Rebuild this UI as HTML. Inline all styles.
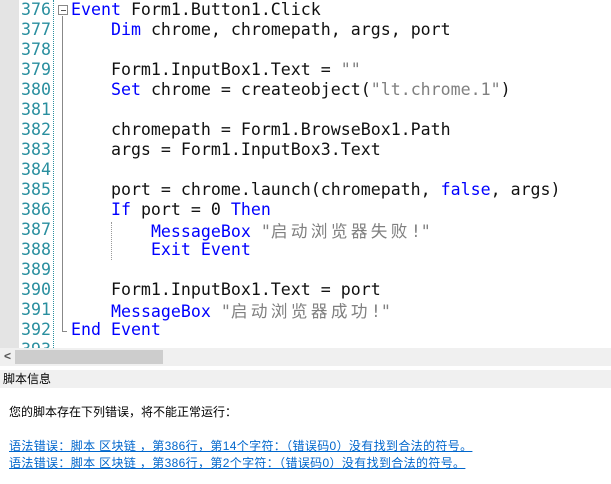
<!DOCTYPE html>
<html><head><meta charset="utf-8"><style>
*{margin:0;padding:0}
body{width:611px;height:484px;overflow:hidden;background:#fff;position:relative;font-family:"DejaVu Sans Mono",monospace}
.gut{position:absolute;left:0;top:0;width:19px;height:348px;background:#e4e4e4}
.num{position:absolute;left:19px;top:0;width:33px;height:348px;background:#fff;overflow:hidden}
.num div{height:20px;line-height:20px;font-size:16.6px;color:#2a8f9f;text-align:right;padding-right:1px}
.sep{position:absolute;left:53px;top:0;height:348px;border-left:1px dotted #2a8f9f}
.fold{position:absolute;left:62px;top:16px;height:316px;border-left:1px solid #888}
.box{position:absolute;left:58px;top:5px;width:8px;height:8px;border:1px solid #888;background:#fff}
.box:after{content:"";position:absolute;left:2px;top:4px;width:5px;height:1px;background:#555}
.end{position:absolute;left:62px;top:331px;width:5px;border-top:1px solid #888}
.code{position:absolute;left:71px;top:0;width:540px;height:348px;overflow:hidden}
.code div{height:20px;line-height:20px;font-size:16.6px;color:#111;white-space:pre}
.k{color:#0000ff}.s{color:#808080}
.cj{font-family:"Noto Sans CJK SC",monospace;letter-spacing:3.4px}
.guide{position:absolute;left:111px;top:222px;height:38px;border-left:1px dotted #999}
.sb{position:absolute;left:0;top:348px;width:611px;height:18px;background:#f0f0f0}
.thumb{position:absolute;left:15px;top:350px;width:148px;height:14px;background:#cdcdcd}
.arr{position:absolute;left:4px;top:349px;font:bold 12px "Liberation Sans",sans-serif;color:#555}
.hdr{position:absolute;left:0;top:370px;width:611px;height:18px;background:#f0f0f0;font:12px "Liberation Sans","Noto Sans CJK SC",sans-serif;line-height:18px;padding-left:3px;color:#000}
.msg{position:absolute;left:9px;top:403px;font:12px "Liberation Sans","Noto Sans CJK SC",sans-serif;color:#000}
.lk{position:absolute;left:9px;font:12px "Liberation Sans","Noto Sans CJK SC",sans-serif;color:#0066cc;text-decoration:underline;white-space:nowrap;letter-spacing:0.35px}
</style></head><body>
<div class="gut"></div>
<div class="num">
<div>376</div><div>377</div><div>378</div><div>379</div><div>380</div><div>381</div><div>382</div><div>383</div><div>384</div><div>385</div><div>386</div><div>387</div><div>388</div><div>389</div><div>390</div><div>391</div><div>392</div><div>393</div>
</div>
<div class="sep"></div>
<div class="fold"></div><div class="box"></div><div class="end"></div>
<div class="code">
<div><span class="k">Event</span> Form1.Button1.Click</div>
<div>    <span class="k">Dim</span> chrome, chromepath, args, port</div>
<div> </div>
<div>    Form1.InputBox1.Text = <span class="s">""</span></div>
<div>    <span class="k">Set</span> chrome = createobject(<span class="s">"lt.chrome.1"</span>)</div>
<div> </div>
<div>    chromepath = Form1.BrowseBox1.Path</div>
<div>    args = Form1.InputBox3.Text</div>
<div> </div>
<div>    port = chrome.launch(chromepath, <span class="k">false</span>, args)</div>
<div>    <span class="k">If</span> port = 0 <span class="k">Then</span></div>
<div>        <span class="k">MessageBox</span> <span class="s">"<span class="cj">启动浏览器失败</span>!"</span></div>
<div>        <span class="k">Exit Event</span></div>
<div> </div>
<div>    Form1.InputBox1.Text = port</div>
<div>    <span class="k">MessageBox</span> <span class="s">"<span class="cj">启动浏览器成功</span>!"</span></div>
<div><span class="k">End Event</span></div>
</div>
<div class="guide"></div>
<div class="sb"></div><div class="thumb"></div><div class="arr">&lt;</div>
<div class="hdr">脚本信息</div>
<div class="msg">您的脚本存在下列错误，将不能正常运行：</div>
<div class="lk" style="top:437px">语法错误：脚本 区块链 ，第386行，第14个字符：（错误码0）没有找到合法的符号。</div>
<div class="lk" style="top:454px">语法错误：脚本 区块链 ，第386行，第2个字符：（错误码0）没有找到合法的符号。</div>
</body></html>
